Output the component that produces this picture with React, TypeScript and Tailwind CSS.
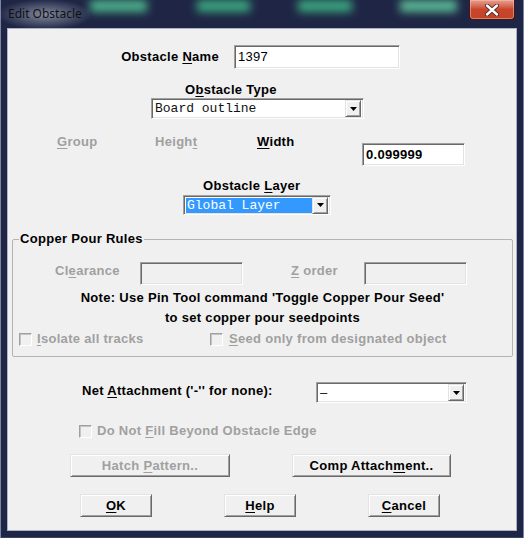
import React from "react";

type P = { className?: string; children?: React.ReactNode };

// underlined access key letter
function K({ children }: P) {
  return <span className="underline decoration-1 underline-offset-[2px]">{children}</span>;
}

function Field({ className = "", children }: P) {
  return (
    <div
      className={`flex items-center border border-t-[#a0a0a0] border-l-[#a0a0a0] border-b-white border-r-white shadow-[inset_1px_1px_0_#696969,inset_-1px_-1px_0_#e3e3e3] ${className}`}
    >
      {children}
    </div>
  );
}

function DropBtn() {
  return (
    <div className="ml-auto flex h-[17px] w-[16px] items-center justify-center border border-t-[#e3e3e3] border-l-[#e3e3e3] border-b-[#696969] border-r-[#696969] bg-[#f0f0f0] shadow-[inset_1px_1px_0_#fff,inset_-1px_-1px_0_#a0a0a0]">
      <svg width="7" height="4" viewBox="0 0 7 4">
        <path d="M0 0h7L3.5 4z" fill="#000" />
      </svg>
    </div>
  );
}

function Combo({ className = "", children, selected }: P & { selected?: boolean }) {
  return (
    <Field className={`bg-white pl-[2px] pr-[2px] ${className}`}>
      <div
        className={`flex h-[15px] flex-1 items-center pl-[1px] font-['Liberation_Mono',monospace] text-[13px] font-normal leading-[15px] tracking-normal ${
          selected ? "bg-[#3399ff] text-white" : "text-[#111]"
        }`}
      >
        {children}
      </div>
      <DropBtn />
    </Field>
  );
}

function Check() {
  return (
    <span className="inline-block h-[13px] w-[13px] shrink-0 border border-t-[#a0a0a0] border-l-[#a0a0a0] border-b-white border-r-white bg-[#f0f0f0] shadow-[inset_1px_1px_0_#c4c4c4]" />
  );
}

function Btn({ className = "", children, disabled }: P & { disabled?: boolean }) {
  return (
    <button
      className={`flex h-[23px] items-center justify-center border border-t-[#e3e3e3] border-l-[#e3e3e3] border-b-[#696969] border-r-[#696969] bg-[#f0f0f0] text-[13px] font-bold shadow-[inset_1px_1px_0_#fff,inset_-1px_-1px_0_#a0a0a0] ${
        disabled ? "text-[#a0a0a0]" : "text-black"
      } ${className}`}
    >
      <span>{children}</span>
    </button>
  );
}

export default function App() {
  return (
    <div className="flex h-[538px] w-[524px] flex-col bg-[#1f2645] font-['Liberation_Sans',Arial,sans-serif] shadow-[inset_1px_0_0_#7a84a4,inset_-1px_0_0_#7a84a4,inset_0_-1px_0_#3a4266]">
      {/* Title bar */}
      <div className="flex h-[29px] items-start">
        <div className="h-[29px] w-[90px] bg-[radial-gradient(ellipse_at_center,rgba(196,202,216,0.6),transparent_75%)] pl-[8px] pt-[6px] font-['Noto_Sans',sans-serif] text-[12px] leading-[16px] text-[#111]">
          Edit Obstacle
        </div>
        <div className="h-[12px] w-[57px] bg-[#4cb08a] blur-[4px]" />
        <div className="ml-[50px] h-[12px] w-[53px] bg-[#3aa67e] blur-[4px]" />
        <div className="ml-[48px] h-[12px] w-[54px] bg-[#3aa67e] blur-[4px]" />
        <div className="ml-[48px] h-[12px] w-[57px] bg-[#5ab894] blur-[4px]" />
        <div className="ml-[12px] flex h-[20px] w-[46px] items-center justify-center rounded-b-[4px] border border-t-0 border-[#3a1a1a] bg-gradient-to-b from-[#e8a090] via-[#c8452c] to-[#c2442a] shadow-[inset_0_0_0_1px_rgba(255,200,190,0.45)]">
          <svg width="14" height="12" viewBox="0 0 14 12">
            <path d="M2 1.5l10 9M12 1.5l-10 9" stroke="#3a2020" strokeWidth="4" strokeLinecap="round" />
            <path d="M2 1.5l10 9M12 1.5l-10 9" stroke="#fff" strokeWidth="2.4" strokeLinecap="round" />
          </svg>
        </div>
      </div>

      {/* Client area */}
      <div className="ml-[8px] flex h-[501px] w-[508px] flex-col bg-[#f0f0f0] text-[13px] font-bold leading-[14px] tracking-[0.3px] text-black shadow-[0_0_0_1px_#aab2c4]">
        <div className="mt-[16px] flex h-[24px] items-center">
          <div className="w-[211px] text-right">
            Obstacle <K>N</K>ame
          </div>
          <Field className="ml-[15px] h-[24px] w-[166px] bg-white pl-[3px] font-normal">1397</Field>
        </div>

        <div className="mt-[14px] h-[14px] pl-[177px]">
          O<K>b</K>stacle Type
        </div>
        <Combo className="ml-[143px] mt-[1px] h-[21px] w-[213px]">Board outline</Combo>

        <div className="mt-[16px] flex h-[31px] items-start">
          <span className="ml-[49px] w-[98px] text-[#a0a0a0]">
            <K>G</K>roup
          </span>
          <span className="w-[102px] text-[#a0a0a0]">
            Heigh<K>t</K>
          </span>
          <span className="w-[105px]">
            <K>W</K>idth
          </span>
          <Field className="mt-[8px] h-[23px] w-[103px] bg-white pl-[3px]">0.099999</Field>
        </div>

        <div className="mt-[13px] h-[14px] pl-[195px]">
          Obstacle <K>L</K>ayer
        </div>
        <Combo selected className="ml-[175px] mt-[2px] h-[20px] w-[148px]">
          Global Layer
        </Combo>

        <fieldset className="ml-[4px] mt-[17px] w-[501px] rounded-[2px] border border-[#b4b4b4] pb-[10px]">
          <legend className="ml-[6px] px-[1px] leading-[14px]">Copper Pour Rules</legend>
          <div className="mt-[16px] flex h-[23px] items-start text-[#a0a0a0]">
            <span className="ml-[42px] mt-[2px] w-[85px]">
              Cl<K>e</K>arance
            </span>
            <Field className="h-[23px] w-[103px]" />
            <span className="ml-[48px] mt-[2px] w-[73px]">
              <K>Z</K> order
            </span>
            <Field className="h-[23px] w-[103px]" />
          </div>
          <div className="mt-[3px] text-center leading-[20px]">
            <div>Note: Use Pin Tool command 'Toggle Copper Pour Seed'</div>
            <div>to set copper pour seedpoints</div>
          </div>
          <div className="mt-[4px] flex h-[14px] items-center text-[#a0a0a0]">
            <span className="ml-[6px] flex w-[191px] items-center gap-[5px]">
              <Check />
              <span>
                <K>I</K>solate all tracks
              </span>
            </span>
            <span className="flex items-center gap-[6px]">
              <Check />
              <span>
                <K>S</K>eed only from designated object
              </span>
            </span>
          </div>
        </fieldset>

        <div className="mt-[25px] flex h-[21px] items-center">
          <span className="mb-[3px] ml-[74px] w-[234px]">
            Net <K>A</K>ttachment ('-'' for none):
          </span>
          <Combo className="h-[21px] w-[151px]">
            <span className="font-['Liberation_Sans',sans-serif]">–</span>
          </Combo>
        </div>

        <div className="ml-[71px] mt-[21px] flex h-[14px] items-center gap-[5px] text-[#a0a0a0]">
          <Check />
          <span>
            Do Not <K>F</K>ill Beyond Obstacle Edge
          </span>
        </div>

        <div className="mt-[16px] flex">
          <Btn disabled className="ml-[62px] w-[160px]">
            Hatch <K>P</K>attern..
          </Btn>
          <Btn className="ml-[62px] w-[159px]">
            Comp Attach<K>m</K>ent..
          </Btn>
        </div>

        <div className="mt-[17px] flex">
          <Btn className="ml-[72px] w-[72px]">
            <K>O</K>K
          </Btn>
          <Btn className="ml-[72px] w-[72px]">
            <K>H</K>elp
          </Btn>
          <Btn className="ml-[72px] w-[72px]">
            <K>C</K>ancel
          </Btn>
        </div>
      </div>
    </div>
  );
}
